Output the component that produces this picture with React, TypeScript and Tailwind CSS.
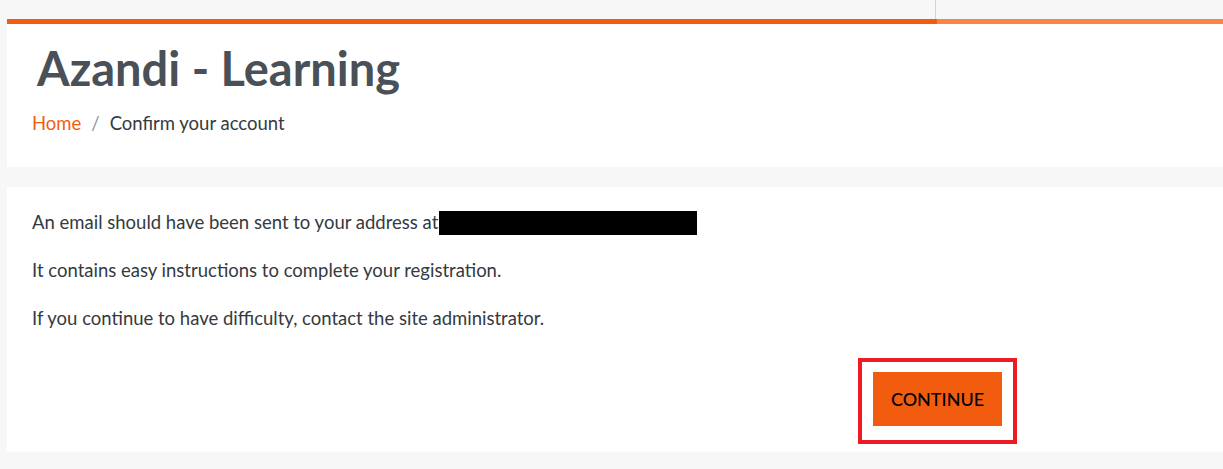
const App = () => {
  return (
    <div className="min-h-[469px] bg-[#f7f7f7] font-['Lato',sans-serif]">
      <div className="flex h-[19px]">
        <div className="w-[936px] border-r border-[#d4d4d4]" />
        <div className="flex-1" />
      </div>
      <div className="ml-[7px] flex h-[5px]">
        <div className="w-[930px] bg-[#f25c0f]" />
        <div className="flex-1 bg-[#fc8448]" />
      </div>

      <div className="ml-[7px] bg-white pl-[30px] pt-[16px] pb-[32px]">
        <h1 className="text-[47px] leading-[56px] font-bold text-[#495057]">Azandi - Learning</h1>
        <nav className="mt-[15px] flex items-center text-[18.5px] leading-[24px] -ml-[5px]">
          <a className="text-[#f25c0f]">Home</a>
          <span className="px-[10px] text-[#8a9198]">/</span>
          <span className="text-[#343a40]">Confirm your account</span>
        </nav>
      </div>

      <div className="ml-[7px] mt-[20px] bg-white pl-[25px] pt-[22px] pb-[8px] text-[18.5px] leading-[27px] text-[#343a40]">
        <p className="flex items-center">
          An email should have been sent to your address at
          <span className="ml-[1px] inline-block h-[24px] w-[258px] bg-black" />
        </p>
        <p className="mt-[21px]">It contains easy instructions to complete your registration.</p>
        <p className="mt-[21px]">If you continue to have difficulty, contact the site administrator.</p>
        <div className="mt-[26px] flex">
          <div className="ml-[826px] border-[4px] border-[#ed1c24] px-[11px] pt-[10px] pb-[14px]">
            <button className="block h-[54px] w-[129px] bg-[#f25c0f] text-[18px] font-medium text-black">CONTINUE</button>
          </div>
        </div>
      </div>
    </div>
  );
};

export default App;
